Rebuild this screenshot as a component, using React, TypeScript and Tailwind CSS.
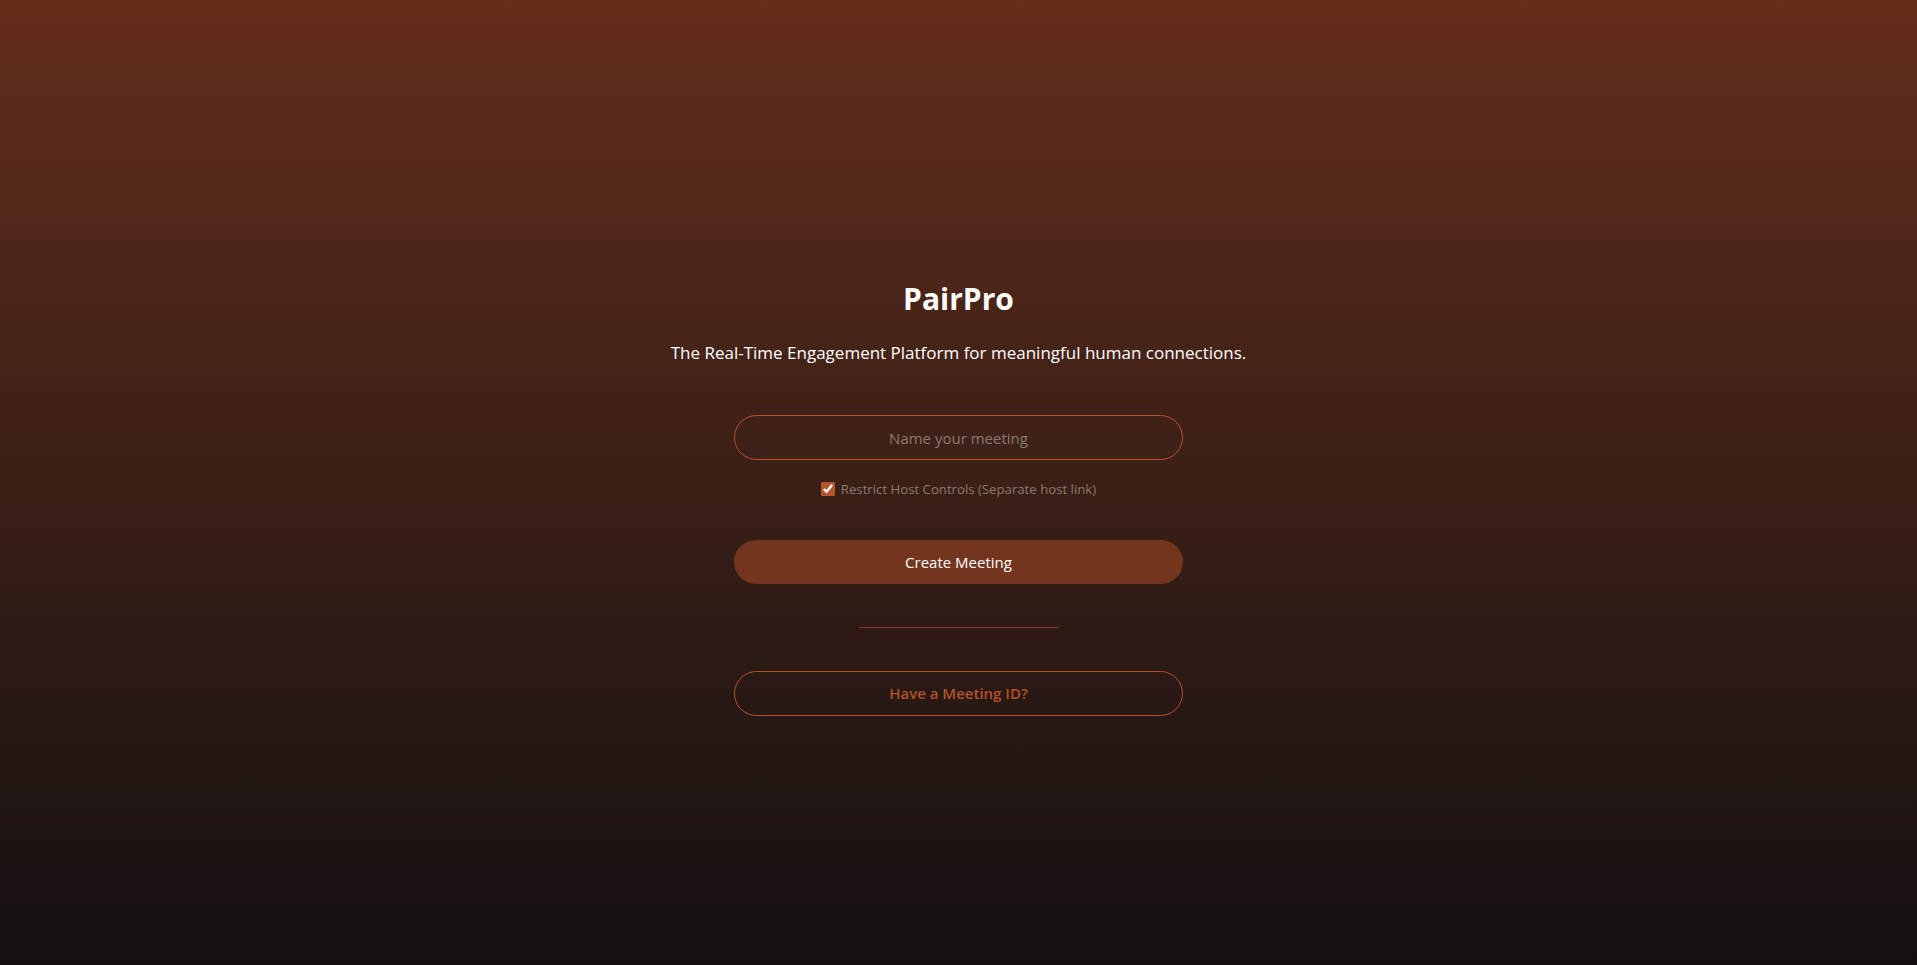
import React, { useState } from 'react';

export default function App() {
  const [meetingName, setMeetingName] = useState('');
  const [restrictHost, setRestrictHost] = useState(true);

  return (
    <div className="min-h-screen w-full bg-gradient-to-b from-[#642e1a] to-[#141010] flex flex-col items-center pt-[279px] font-['Open_Sans',sans-serif]">
      <h1 className="text-[30px] leading-[40px] font-bold text-white">PairPro</h1>
      <p className="mt-[21px] text-[17px] leading-[26px] text-white">
        The Real-Time Engagement Platform for meaningful human connections.
      </p>

      <div className="mt-[49px] w-[449px] flex flex-col items-center">
        <input
          value={meetingName}
          onChange={(e) => setMeetingName(e.target.value)}
          placeholder="Name your meeting"
          className="w-full h-[45px] rounded-full border border-[#b5532b] bg-transparent text-center text-[15px] text-white placeholder:text-[#8a7a70] outline-none"
        />

        <label className="mt-[20px] flex items-center gap-[6px] text-[13.2px] leading-[18px] text-[#8a7a70] cursor-pointer">
          <input
            type="checkbox"
            checked={restrictHost}
            onChange={(e) => setRestrictHost(e.target.checked)}
            className="w-[14px] h-[14px] accent-[#b5532b] m-0"
          />
          Restrict Host Controls (Separate host link)
        </label>

        <button className="mt-[42px] w-full h-[44px] rounded-full bg-[#74351d] text-white text-[15px]">
          Create Meeting
        </button>

        <div className="mt-[43px] w-[200px] h-px bg-[#7c3b20]" />

        <button className="mt-[43px] w-full h-[45px] rounded-full border border-[#b5532b] bg-transparent text-[#b5512b] text-[15px] font-semibold">
          Have a Meeting ID?
        </button>
      </div>
    </div>
  );
}
